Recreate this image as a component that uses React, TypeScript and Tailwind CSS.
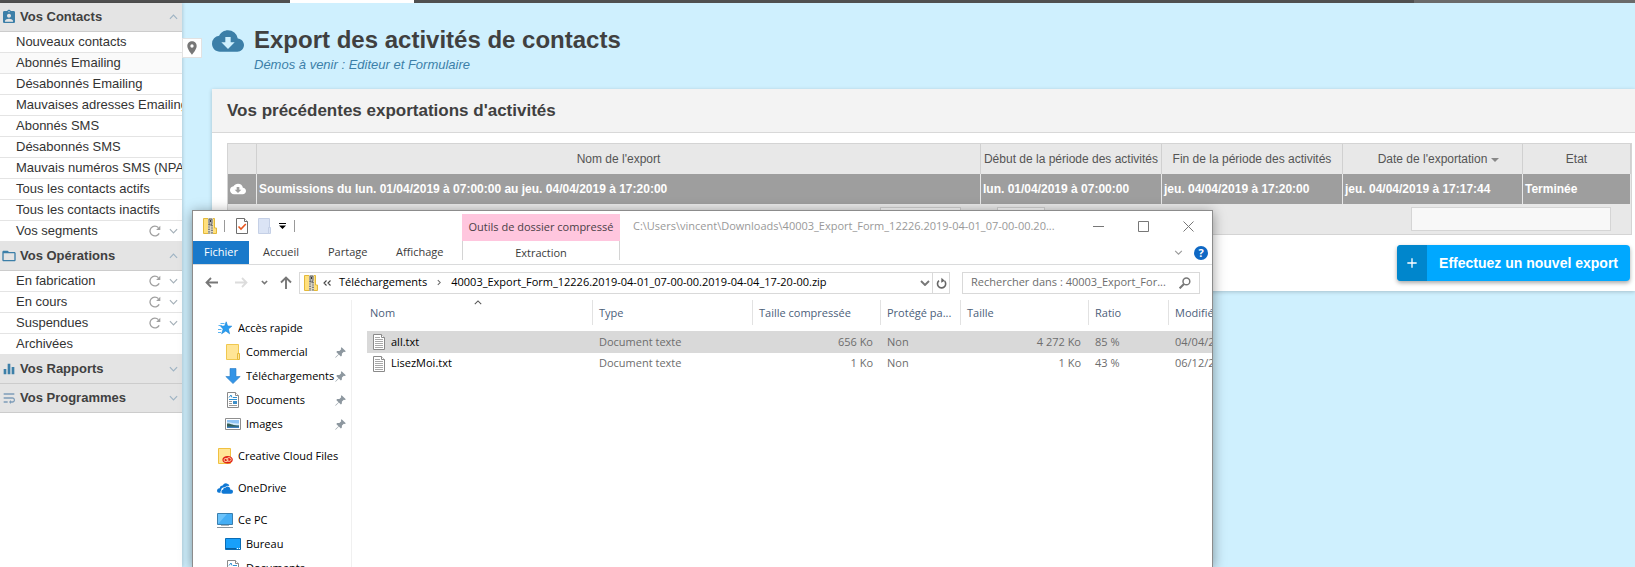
import React from "react";
import {
  MdAssignmentInd,
  MdCloudDownload,
  MdEqualizer,
  MdFolderOpen,
  MdPlace,
  MdWrapText,
  MdAdd,
} from "react-icons/md";

type Item = { label: string; tools?: boolean; hover?: boolean };
type Section = { title: string; icon: React.ReactNode; open: boolean; items: Item[] };

const sections: Section[] = [
  {
    title: "Vos Contacts",
    icon: <MdAssignmentInd className="size-4 text-[#3c7fa8]" />,
    open: true,
    items: [
      { label: "Nouveaux contacts" },
      { label: "Abonnés Emailing", hover: true },
      { label: "Désabonnés Emailing" },
      { label: "Mauvaises adresses Emailing" },
      { label: "Abonnés SMS" },
      { label: "Désabonnés SMS" },
      { label: "Mauvais numéros SMS (NPAI)" },
      { label: "Tous les contacts actifs" },
      { label: "Tous les contacts inactifs" },
      { label: "Vos segments", tools: true },
    ],
  },
  {
    title: "Vos Opérations",
    icon: <MdFolderOpen className="size-4 text-[#3c7fa8]" />,
    open: true,
    items: [
      { label: "En fabrication", tools: true },
      { label: "En cours", tools: true },
      { label: "Suspendues", tools: true },
      { label: "Archivées" },
    ],
  },
  { title: "Vos Rapports", icon: <MdEqualizer className="size-4 text-[#3c7fa8]" />, open: false, items: [] },
  { title: "Vos Programmes", icon: <MdWrapText className="size-4 text-[#7d9cb8]" />, open: false, items: [] },
];

function Chevron({ up, className }: { up?: boolean; className: string }) {
  return (
    <svg viewBox="0 0 10 6" className={className} fill="none" stroke="currentColor" strokeWidth="1.3">
      <path d={up ? "M1 5 L5 1 L9 5" : "M1 1 L5 5 L9 1"} />
    </svg>
  );
}

function Reload() {
  return (
    <svg viewBox="0 0 12 12" className="size-3 text-[#a0a0a0]" fill="none" stroke="currentColor" strokeWidth="1.3">
      <path d="M10.2 8.4 A4.9 4.9 0 1 1 9.4 2.6" />
      <path d="M11.3 0.8 V5 H7.1 Z" fill="currentColor" stroke="none" />
    </svg>
  );
}

function Sidebar() {
  return (
    <nav className="w-[182px] shrink-0 overflow-hidden bg-white text-[13px] text-[#333] shadow-[1px_0_3px_rgba(0,0,0,0.15)]">
      {sections.map((s) => (
        <section key={s.title}>
          <button
            type="button"
            className="flex h-[29px] w-full items-center border-b border-[#ccc] bg-[#e4e4e4] pr-1 pl-px text-left font-bold text-[#404040]"
          >
            {s.icon}
            <span className="ml-[3px] flex-1 whitespace-nowrap">{s.title}</span>
            <Chevron up={s.open} className="h-[6px] w-[9px] text-[#9fb4c4]" />
          </button>
          <ul>
            {s.items.map((i) => (
              <li
                key={i.label}
                className={
                  "flex h-[21px] items-center border-b border-[#e4e4e4] pr-1 pl-4 " + (i.hover ? "bg-[#fafafa]" : "bg-white")
                }
              >
                <a href="#" className="flex-1 whitespace-nowrap">
                  {i.label}
                </a>
                {i.tools && (
                  <>
                    <button type="button" aria-label={"Actualiser " + i.label} className="mr-2">
                      <Reload />
                    </button>
                    <Chevron className="h-[6px] w-[9px] text-[#a5b0b8]" />
                  </>
                )}
              </li>
            ))}
          </ul>
        </section>
      ))}
    </nav>
  );
}

function ExportTable() {
  const th = "border-r border-[#d0d0d0] p-0 font-normal whitespace-nowrap";
  const td = "border-r border-[#e8e8e8] px-[2px] py-0 whitespace-nowrap";
  return (
    <div className="border border-[#d4d4d4] bg-[#e8e8e8]">
      <table className="w-full table-fixed border-separate border-spacing-0 text-xs">
        <colgroup>
          <col className="w-[29px]" />
          <col />
          <col className="w-[181px]" />
          <col className="w-[181px]" />
          <col className="w-[180px]" />
          <col className="w-[108px]" />
        </colgroup>
        <thead>
          <tr className="h-[30px] text-[#555]">
            <th className={th} aria-label="Télécharger" />
            <th className={th}>Nom de l'export</th>
            <th className={th}>Début de la période des activités</th>
            <th className={th}>Fin de la période des activités</th>
            <th className={th + " pl-3"}>
              Date de l'exportation
              <svg viewBox="0 0 8 4" className="ml-1 inline h-1 w-2 align-middle" fill="#888">
                <path d="M0 0 H8 L4 4 Z" />
              </svg>
            </th>
            <th className={th}>Etat</th>
          </tr>
        </thead>
        <tbody>
          <tr className="h-[30px] bg-[#9e9e9e] font-bold text-white">
            <td className={td}>
              <MdCloudDownload className="size-4" />
            </td>
            <td className={td}>Soumissions du lun. 01/04/2019 à 07:00:00 au jeu. 04/04/2019 à 17:20:00</td>
            <td className={td}>lun. 01/04/2019 à 07:00:00</td>
            <td className={td}>jeu. 04/04/2019 à 17:20:00</td>
            <td className={td}>jeu. 04/04/2019 à 17:17:44</td>
            <td className={td}>Terminée</td>
          </tr>
        </tbody>
      </table>
      <div className="grid h-[30px] grid-cols-[1fr_auto_1fr] items-center pr-5 pl-[86px]">
        <span />
        <div className="flex gap-9">
          <input aria-label="Page" className="h-6 w-[81px] border border-[#d0d0d0] bg-[#f8f8f8]" />
          <select aria-label="Lignes par page" className="h-6 w-12 border border-[#d0d0d0] bg-[#f8f8f8]" />
        </div>
        <input aria-label="Rechercher" className="h-6 w-[200px] justify-self-end border border-[#d5d5d5] bg-[#f8f8f8]" />
      </div>
    </div>
  );
}

function ZipIcon() {
  return (
    <svg viewBox="0 0 14 16" className="h-4 w-[14px] shrink-0">
      <path d="M0.5 0.5 H11.5 V10 H13.5 V15.5 H0.5 Z" fill="#ffe07d" stroke="#e3b93a" />
      <path d="M5 0 H10 V16 H5 Z" fill="#d8d4c4" />
      <path d="M6 6 V16 M9 7 V16" stroke="#6b6b6b" strokeDasharray="1.2 1.2" strokeWidth="1.6" />
      <path d="M6 1 H9 V5 L8.5 7 H6.5 L6 5 Z" fill="#b8b8b8" stroke="#555" strokeWidth="0.8" />
      <path d="M7.5 2 V4" stroke="#333" />
    </svg>
  );
}

function FolderIcon() {
  return (
    <svg viewBox="0 0 14 16" className="h-4 w-[14px]">
      <path d="M0.5 0.5 H12.5 V15.5 H0.5 Z" fill="#ffe596" stroke="#f0c850" />
      <path d="M11.5 9.5 H13.5 V15.5 H11.5 Z" fill="#ffe596" stroke="#e5b93c" />
    </svg>
  );
}

function TextFileIcon() {
  return (
    <svg viewBox="0 0 12 16" className="h-4 w-3" fill="#fff" stroke="#8a8a8a">
      <path d="M0.5 0.5 H8.5 L11.5 3.5 V15.5 H0.5 Z" />
      <path d="M8.5 0.5 V3.5 H11.5" />
      <path d="M2 3.5 H7 M2 5.5 H10 M2 7.5 H10 M2 9.5 H10 M2 11.5 H10 M2 13.5 H10" stroke="#a8a8a8" />
    </svg>
  );
}

function DocumentIcon() {
  return (
    <svg viewBox="0 0 12 16" className="h-4 w-3" fill="#fff" stroke="#8a8a8a">
      <path d="M0.5 0.5 H8.5 L11.5 3.5 V15.5 H0.5 Z" />
      <path d="M8.5 0.5 V3.5 H11.5" />
      <path d="M2 5.5 L4 3 L5 5.5 M6 5.5 H10 M2 7.5 H10" stroke="#2f8fd0" />
      <path d="M2 9.5 H5 M2 11.5 H5 M2 13.5 H10" stroke="#999" />
      <path d="M6 9 H10 V12 H6 Z" fill="#3d8fc8" stroke="none" />
    </svg>
  );
}

function DownloadIcon() {
  return (
    <svg viewBox="0 0 16 16" className="size-4">
      <path d="M5 0.5 H11 V8.5 H15.2 L8 15.6 L0.8 8.5 H5 Z" fill="#3394e6" stroke="#2a7cc4" strokeWidth="0.6" />
    </svg>
  );
}

function PictureIcon() {
  return (
    <svg viewBox="0 0 16 12" className="h-3 w-4">
      <path d="M0.5 0.5 H15.5 V11.5 H0.5 Z" fill="#fff" stroke="#8f8f8f" />
      <path d="M2 2 H14 V10 H2 Z" fill="#8fc4f5" />
      <path d="M2 4.5 C5 3.5 8 6 14 5.5 V7 H2 Z" fill="#d4eafb" />
      <path d="M2 5.5 C5 5 8 7.5 14 7.6 V9 H2 Z" fill="#33605a" />
      <path d="M2 8.6 H14 V10 H2 Z" fill="#3d7fc0" />
    </svg>
  );
}

function StarIcon() {
  return (
    <svg viewBox="0 0 14 14" className="size-[14px]">
      <path d="M8.2 0.8 L9.6 5 L13.8 5.2 L10.4 8 L11.6 12.8 L7.8 10 L3.6 12.8 L5.2 8 L2.6 5.2 L6.6 5 Z" fill="#2a9df0" stroke="#1583d6" strokeWidth="0.6" />
      <path d="M2.5 2.5 H6.5 M0.5 4.5 H4 M0 8.5 H3.5 M0 11.5 H3" stroke="#59b4f2" />
    </svg>
  );
}

function CreativeIcon() {
  return (
    <svg viewBox="0 0 15 16" className="h-4 w-[15px]">
      <path d="M0.5 0.5 H12.5 V15.5 H0.5 Z" fill="#ffe596" stroke="#f0c040" />
      <ellipse cx="9.6" cy="11.8" rx="5.2" ry="3.8" fill="#e01f14" />
      <g fill="none" stroke="#ffdcb0" strokeWidth="0.9">
        <ellipse cx="8" cy="12" rx="2" ry="1.7" />
        <ellipse cx="11" cy="11.5" rx="2.2" ry="1.9" />
      </g>
    </svg>
  );
}

function OneDriveIcon() {
  return (
    <svg viewBox="0 0 16 11" className="h-[11px] w-4" fill="#0f78d4">
      <path d="M0 8 Q0 5.4 2.6 5.2 Q3 2.4 5.6 2.6 Q7 0 9.6 0.4 Q12 0.8 12.4 3 Q9.8 2 8 4.2 Q4.4 4 4 7.4 Q3.2 8.4 3.6 9.8 H2 Q0 9.6 0 8 Z" />
      <path d="M4.4 9 Q4.2 7 6.2 6.6 Q6 4.6 8.4 4.8 Q10 2.8 12 4 Q13.6 4.8 13.2 6.4 Q16 6.4 16 8.8 Q16 10.8 14 10.8 H6.4 Q4.4 10.8 4.4 9 Z" />
    </svg>
  );
}

function ComputerIcon() {
  return (
    <svg viewBox="0 0 16 15" className="h-[15px] w-4">
      <path d="M0.5 0.5 H15.5 V11.5 H0.5 Z" fill="#6cc3fa" stroke="#3a7fae" />
      <path d="M1 11 L10 1 H15 V11 Z" fill="#45aef5" />
      <path d="M4 12.5 H12" stroke="#a8b4bc" />
      <path d="M0 14.5 H16" stroke="#8a949c" />
    </svg>
  );
}

function DesktopIcon() {
  return (
    <svg viewBox="0 0 16 12" className="h-3 w-4">
      <path d="M0.5 0.5 H15.5 V11.5 H0.5 Z" fill="#18a0fb" stroke="#0b6cb4" />
      <path d="M1 10.5 H11" stroke="#0a5f9f" />
      <path d="M12 10.5 H13 M14 10.5 H15" stroke="#fff" />
    </svg>
  );
}

function PinIcon() {
  return (
    <svg viewBox="0 0 12 12" className="size-[11px] shrink-0" fill="#8d979f">
      <path d="M7.2 0.2 L11.8 4.6 L10.8 5.4 L9.6 5.2 L7.6 7.2 L7.4 9.6 L6.4 10.4 L4.2 8.2 L1 11.4 L0.2 11.8 L0.6 11 L3.8 7.8 L1.4 5.4 L2.4 4.4 L4.8 4.4 L6.8 2.4 L6.4 1.2 Z" />
    </svg>
  );
}

type Node = { label: string; icon: React.ReactNode; child?: boolean; pin?: boolean; gap?: boolean };
const tree: Node[] = [
  { label: "Accès rapide", icon: <StarIcon /> },
  { label: "Commercial", icon: <FolderIcon />, child: true, pin: true },
  { label: "Téléchargements", icon: <DownloadIcon />, child: true, pin: true },
  { label: "Documents", icon: <DocumentIcon />, child: true, pin: true },
  { label: "Images", icon: <PictureIcon />, child: true, pin: true },
  { label: "Creative Cloud Files", icon: <CreativeIcon />, gap: true },
  { label: "OneDrive", icon: <OneDriveIcon />, gap: true },
  { label: "Ce PC", icon: <ComputerIcon />, gap: true },
  { label: "Bureau", icon: <DesktopIcon />, child: true },
  { label: "Documents", icon: <DocumentIcon />, child: true },
];

const files = [
  { name: "all.txt", type: "Document texte", packed: "656 Ko", locked: "Non", size: "4 272 Ko", ratio: "85 %", date: "04/04/2019 17:17", selected: true },
  { name: "LisezMoi.txt", type: "Document texte", packed: "1 Ko", locked: "Non", size: "1 Ko", ratio: "43 %", date: "06/12/2018 10:02", selected: false },
];

function FileList() {
  const th = "border-r border-[#e2e2e2] px-[6px] pt-px pb-0 text-left font-normal whitespace-nowrap";
  const td = "py-0 pr-2 pl-[6px] whitespace-nowrap";
  return (
    <div className="min-w-0 flex-1 overflow-hidden pl-[15px]">
      <table className="w-[930px] table-fixed border-separate border-spacing-0 text-[#6d6d6d]">
        <colgroup>
          <col className="w-[226px]" />
          <col className="w-[160px]" />
          <col className="w-[128px]" />
          <col className="w-[80px]" />
          <col className="w-[128px]" />
          <col className="w-[80px]" />
          <col className="w-[128px]" />
        </colgroup>
        <thead>
          <tr className="h-[25px] text-[#4c607a]">
            <th className="relative border-r border-[#e2e2e2] pt-px pr-[6px] pb-0 pl-[3px] text-left font-normal whitespace-nowrap">
              Nom
              <Chevron up className="absolute top-0 left-[107px] h-[5px] w-2 text-[#555]" />
            </th>
            <th className={th}>Type</th>
            <th className={th}>Taille compressée</th>
            <th className={th}>Protégé pa...</th>
            <th className={th}>Taille</th>
            <th className={th}>Ratio</th>
            <th className={th}>Modifié le</th>
          </tr>
        </thead>
        <tbody>
          <tr className="h-[6px]">
            <td colSpan={7} className="p-0" />
          </tr>
          {files.map((f) => (
            <tr key={f.name} className={f.selected ? "h-[22px] bg-[#d9d9d9]" : "h-[21px]"}>
              <td className={td}>
                <span className="flex items-center gap-[6px] text-black">
                  <TextFileIcon />
                  {f.name}
                </span>
              </td>
              <td className={td}>{f.type}</td>
              <td className={td + " text-right"}>{f.packed}</td>
              <td className={td}>{f.locked}</td>
              <td className={td + " text-right"}>{f.size}</td>
              <td className={td}>{f.ratio}</td>
              <td className={td}>{f.date}</td>
            </tr>
          ))}
        </tbody>
      </table>
    </div>
  );
}

function TitleBar() {
  return (
    <header className="flex h-[30px] items-stretch">
      <div className="flex w-[269px] items-center pl-[10px]">
        <ZipIcon />
        <span className="ml-[7px] h-3 w-px bg-[#999]" />
        <svg viewBox="0 0 12 16" className="ml-[11px] h-4 w-3" fill="#fff" stroke="#6e6e6e">
          <path d="M0.5 0.5 H8.5 L11.5 3.5 V15.5 H0.5 Z" />
          <path d="M8.5 0.5 V3.5 H11.5" />
          <path d="M2.5 8.5 L5 11 L9.8 6" fill="none" stroke="#e8561e" strokeWidth="1.6" />
        </svg>
        <svg viewBox="0 0 14 16" className="ml-[10px] h-4 w-[14px]" fill="#dbe4f5" stroke="#c5d0e6">
          <path d="M0.5 0.5 H11.5 V15.5 H0.5 Z" />
          <path d="M10.5 9.5 H12.5 V15.5 H10.5 Z" />
        </svg>
        <svg viewBox="0 0 7 6" className="ml-[7px] h-[6px] w-[7px]">
          <path d="M0 0 H7 V1 H0 Z M0 2.5 H7 L3.5 6 Z" />
        </svg>
        <span className="ml-2 h-3 w-px bg-[#999]" />
      </div>
      <div className="mt-[3px] flex w-[158px] items-center justify-center bg-[#ffc6de] whitespace-nowrap text-[#4a4046]">
        Outils de dossier compressé
      </div>
      <div className="ml-[13px] flex min-w-0 flex-1 items-center whitespace-nowrap text-[#999]">
        C:\Users\vincent\Downloads\40003_Export_Form_12226.2019-04-01_07-00-00.20...
      </div>
      <div className="flex items-center gap-[34px] pr-[18px] text-[#777]">
        {[
          { name: "Réduire", d: "M0 5.5 H11" },
          { name: "Agrandir", d: "M0.5 0.5 H10.5 V10.5 H0.5 Z" },
          { name: "Fermer", d: "M0.5 0.5 L10.5 10.5 M10.5 0.5 L0.5 10.5" },
        ].map((b) => (
          <button key={b.name} type="button" aria-label={b.name}>
            <svg viewBox="0 0 11 11" className="size-[11px]" fill="none" stroke="currentColor">
              <path d={b.d} />
            </svg>
          </button>
        ))}
      </div>
    </header>
  );
}

function Ribbon() {
  return (
    <div className="flex h-6 items-stretch border-b border-[#dadbdc] text-[#3b3b3b]">
      <button type="button" className="w-14 bg-[#1979ca] text-white">
        Fichier
      </button>
      <div className="flex w-[213px] items-center pl-[14px]">
        <button type="button" className="w-[65px] text-left">Accueil</button>
        <button type="button" className="w-[68px] text-left">Partage</button>
        <button type="button">Affichage</button>
      </div>
      <button type="button" className="mb-1 w-[158px] border-x border-[#d4d4d4] pt-1">
        Extraction
      </button>
      <div className="ml-auto flex items-center gap-[11px] pr-[4px]">
        <Chevron className="h-[5px] w-[9px] text-[#999]" />
        <button
          type="button"
          aria-label="Aide"
          className="flex size-[14px] items-center justify-center rounded-full bg-[#0f68c4] text-[11px] leading-none font-bold text-white"
        >
          ?
        </button>
      </div>
    </div>
  );
}

function AddressBar() {
  const icon = "fill-none stroke-current";
  return (
    <div className="flex h-[35px] items-center pr-3 pl-3 text-[#777]">
      <svg viewBox="0 0 13 11" className={"h-[11px] w-[13px] " + icon} strokeWidth="1.8">
        <path d="M13 5.5 H1.5 M6 1 L1.5 5.5 L6 10" />
      </svg>
      <svg viewBox="0 0 13 11" className={"ml-[17px] h-[11px] w-[13px] text-[#dcdcdc] " + icon} strokeWidth="1.8">
        <path d="M0 5.5 H11.5 M7 1 L11.5 5.5 L7 10" />
      </svg>
      <svg viewBox="0 0 8 5" className={"ml-[13px] h-[5px] w-[7px] " + icon} strokeWidth="1.8">
        <path d="M1 0.8 L4 3.8 L7 0.8" />
      </svg>
      <svg viewBox="0 0 12 13" className={"ml-3 h-[13px] w-3 " + icon} strokeWidth="1.9">
        <path d="M6 13 V1.5 M1 6.5 L6 1.5 L11 6.5" />
      </svg>
      <div className="ml-[7px] flex h-[22px] min-w-0 flex-1 items-center border border-[#d9d9d9] pl-1 whitespace-nowrap text-black">
        <ZipIcon />
        <svg viewBox="0 0 8 6" className={"ml-[5px] h-[6px] w-2 text-[#444] " + icon} strokeWidth="1.1">
          <path d="M3.5 0.5 L1 3 L3.5 5.5 M7.5 0.5 L5 3 L7.5 5.5" />
        </svg>
        <span className="ml-2">Téléchargements</span>
        <svg viewBox="0 0 5 8" className={"mx-[10px] h-[7px] w-1 text-[#666] " + icon} strokeWidth="1.3">
          <path d="M1 1 L4 4 L1 7" />
        </svg>
        <span>40003_Export_Form_12226.2019-04-01_07-00-00.2019-04-04_17-20-00.zip</span>
        <svg viewBox="0 0 10 6" className={"mr-[2px] ml-auto h-[6px] w-[10px] text-[#777] " + icon} strokeWidth="1.9">
          <path d="M1 1 L5 5 L9 1" />
        </svg>
        <button type="button" aria-label="Actualiser" className="flex h-full w-[17px] items-center justify-center border-l border-[#d9d9d9] text-[#666]">
          <svg viewBox="0 0 11 12" className={"h-3 w-[11px] " + icon} strokeWidth="1.6">
            <path d="M8.6 4 A4.1 4.1 0 1 1 3 3.6" />
            <path d="M2 1.2 H6 V5.2" transform="rotate(90 4 3.2)" strokeWidth="0" />
            <path d="M5.4 0.8 L8.8 3.8 L5.2 5.8 Z" fill="currentColor" stroke="none" />
          </svg>
        </button>
      </div>
      <label className="ml-3 flex h-[22px] w-[238px] items-center border border-[#d9d9d9] pr-2 pl-2">
        <input
          aria-label="Rechercher"
          placeholder="Rechercher dans : 40003_Export_For..."
          className="min-w-0 flex-1 outline-none placeholder:text-[#6d6d6d]"
        />
        <svg viewBox="0 0 12 12" className={"size-3 " + icon} strokeWidth="1.5">
          <circle cx="7.4" cy="4.4" r="3.4" />
          <path d="M5 7 L0.6 11.4" strokeWidth="2" />
        </svg>
      </label>
    </div>
  );
}

function Explorer() {
  return (
    <div className="absolute top-[210px] bottom-0 left-[192px] w-[1021px] shadow-[0_2px_12px_rgba(0,0,0,0.4)]">
      <div className="flex h-full flex-col overflow-hidden border border-b-0 border-[#8c8c8c] bg-white font-['Open_Sans','Noto_Sans',sans-serif] text-[11px] text-black">
        <TitleBar />
        <Ribbon />
        <AddressBar />
        <div className="flex min-h-0 flex-1">
          <ul className="w-[159px] shrink-0 border-r border-[#f0f0f0] pt-4">
            {tree.map((n, i) => (
              <li
                key={i}
                className={"flex h-6 items-center pr-[5px] " + (n.child ? "pl-8 " : "pl-6 ") + (n.gap ? "mt-2" : "")}
              >
                <span className="flex w-4 shrink-0 items-center justify-center">{n.icon}</span>
                <span className="ml-[5px] min-w-0 flex-1 overflow-hidden whitespace-nowrap">{n.label}</span>
                {n.pin && <PinIcon />}
              </li>
            ))}
          </ul>
          <FileList />
        </div>
      </div>
    </div>
  );
}

export default function App() {
  return (
    <div className="relative flex h-screen flex-col overflow-hidden bg-[#cff0fe] font-['Liberation_Sans',Arial,sans-serif]">
      <div className="flex h-[3px] shrink-0 bg-[#505050]">
        <div className="ml-[290px] w-[124px] bg-white" />
        <div className="ml-auto w-[221px] bg-[#6a6a6a]" />
      </div>
      <div className="flex min-h-0 flex-1">
        <div className="flex shrink-0 bg-white">
          <Sidebar />
        </div>
        <button
          type="button"
          aria-label="Épingler le menu"
          className="mt-[35px] flex h-5 w-[20px] shrink-0 items-center justify-center border border-[#e2e2e2] bg-white"
        >
          <MdPlace className="size-4 text-[#777]" />
        </button>
        <main className="min-w-0 flex-1 pl-[10px]">
          <div className="flex h-[86px] pt-[21px]">
            <MdCloudDownload className="mt-px size-8 text-[#3c7fa8]" />
            <div className="ml-[10px]">
              <h1 className="text-2xl leading-8 font-bold text-[#404040]">Export des activités de contacts</h1>
              <p className="text-[13px] leading-[18px] text-[#3c7fa8] italic">Démos à venir : Editeur et Formulaire</p>
            </div>
          </div>
          <section className="bg-white shadow-[0_1px_4px_rgba(0,0,0,0.2)]">
            <h2 className="flex h-11 items-center border-b border-[#d8d8d8] bg-[#f3f3f3] pl-[15px] text-[17px] font-bold text-[#404040]">
              Vos précédentes exportations d'activités
            </h2>
            <div className="pt-[10px] pr-[3px] pb-[10px] pl-[15px]">
              <ExportTable />
              <div className="mt-[10px] flex justify-end pr-[2px]">
                <button
                  type="button"
                  className="flex h-9 items-center overflow-hidden rounded-sm bg-[#00a8ff] text-sm font-bold text-white shadow-[0_2px_4px_rgba(0,0,0,0.35)]"
                >
                  <span className="flex h-full w-[30px] items-center justify-center bg-[#0086cc]">
                    <MdAdd className="size-4" />
                  </span>
                  <span className="px-3">Effectuez un nouvel export</span>
                </button>
              </div>
            </div>
          </section>
        </main>
      </div>
      <Explorer />
    </div>
  );
}
